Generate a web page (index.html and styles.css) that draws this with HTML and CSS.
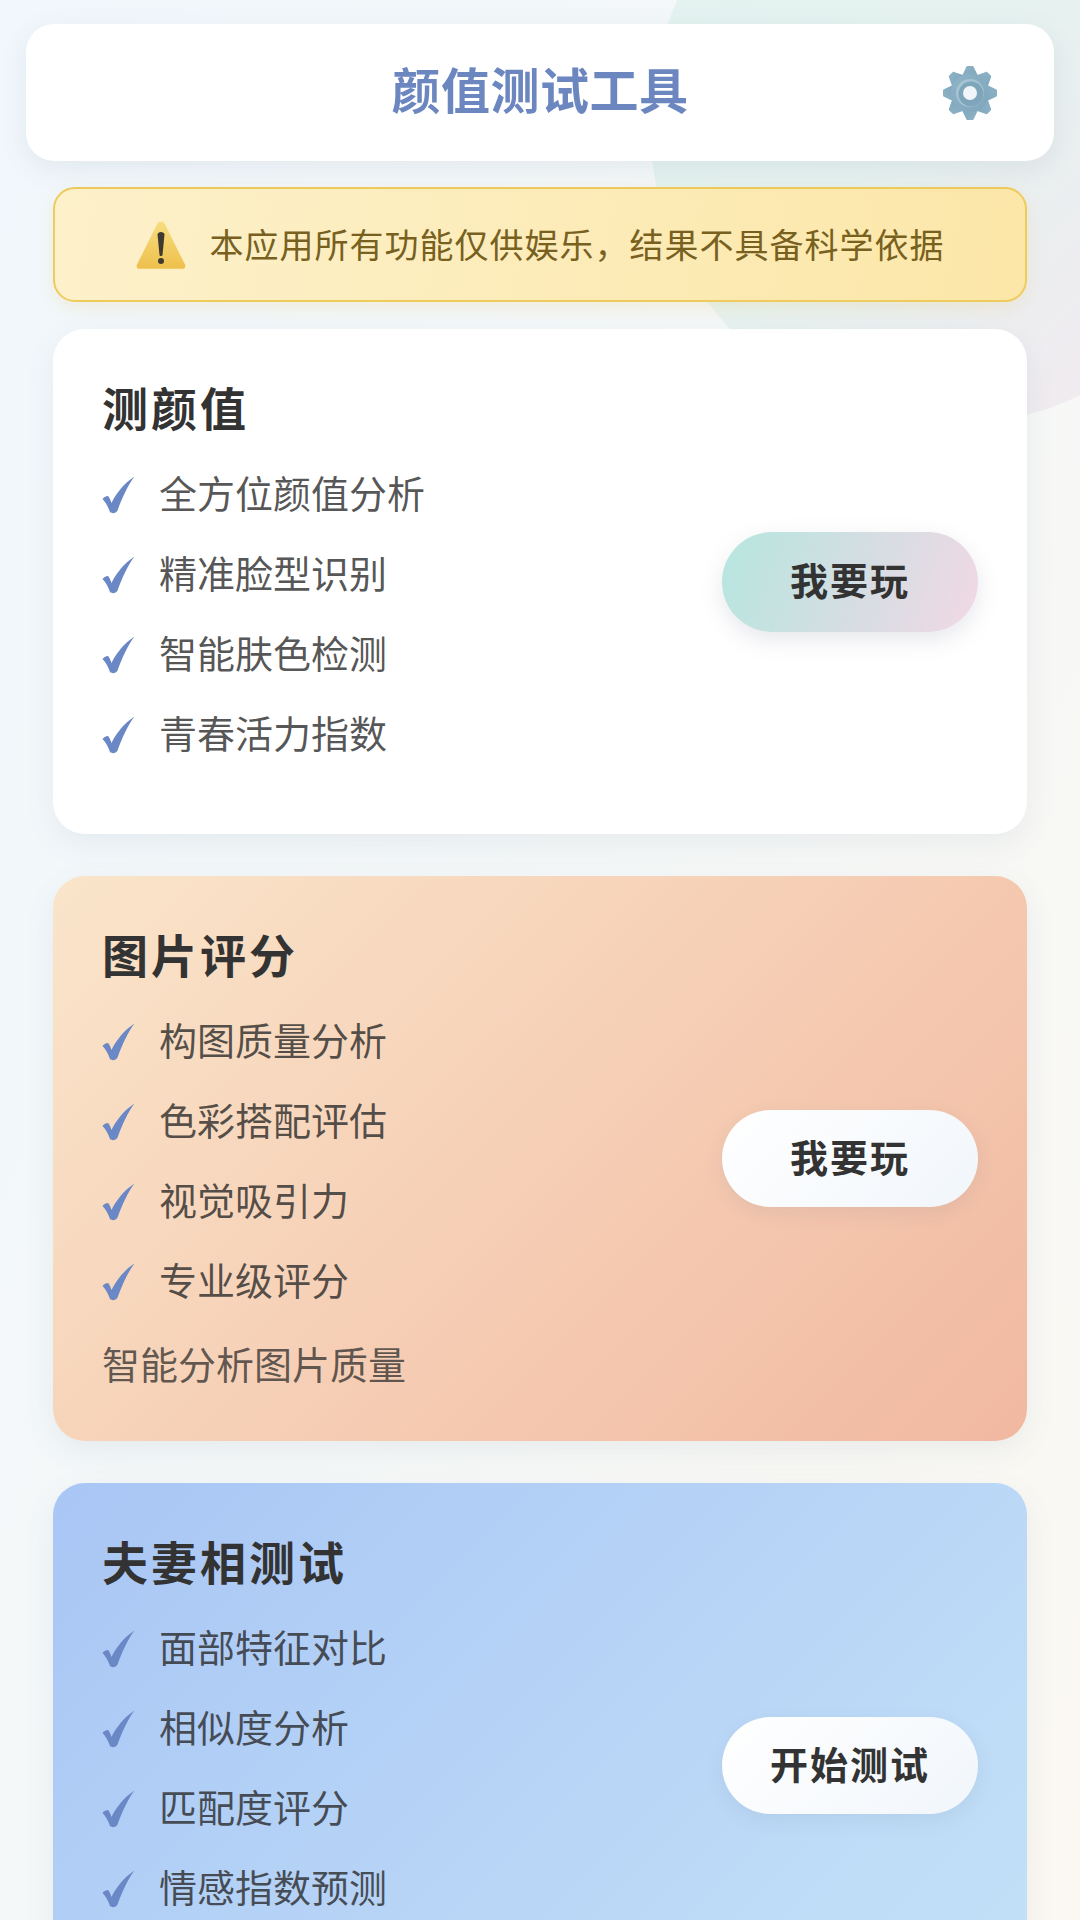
FILE: index.html
```html
<!DOCTYPE html>
<html lang="zh-CN">

<head>
    <meta charset="UTF-8">
    <meta name="viewport" content="width=device-width, initial-scale=1.0">
    <title>颜值测试工具</title>
    <link rel="stylesheet" href="styles.css">
</head>

<body>

    <svg width="0" height="0" class="defs">
        <defs>
            <symbol id="tick" viewBox="0 0 33 38" preserveAspectRatio="none">
                <path d="M0.5 23 C2 21 4 20 6 20 C7.5 21.5 8.5 24 9.5 27 C14 18 21 8 32.5 0.5 C26 9 20.5 21 15.5 34.5 C14 37.5 9.5 38 8 36 C6 30.5 3.5 26 0.5 23 Z" fill="#6a87c6" />
            </symbol>
        </defs>
    </svg>

    <div class="blob"></div>

    <div class="container">
        <header class="header">
            <h1 class="headerTitle">颜值测试工具</h1>
            <svg class="gear" viewBox="0 0 60 60">
                <defs>
                    <linearGradient id="gearFill" x1="0" y1="0" x2="1" y2="1">
                        <stop offset="0" stop-color="#8fb3c7" />
                        <stop offset="1" stop-color="#7ea6bb" />
                    </linearGradient>
                    <path id="gearTooth" d="M21 15 L26 4.5 C26.4 3.4 27 3 28 3 L32 3 C33 3 33.6 3.4 34 4.5 L39 15 Z" />
                </defs>
                <g fill="url(#gearFill)">
                    <use href="#gearTooth" />
                    <use href="#gearTooth" transform="rotate(45 30 30)" />
                    <use href="#gearTooth" transform="rotate(90 30 30)" />
                    <use href="#gearTooth" transform="rotate(135 30 30)" />
                    <use href="#gearTooth" transform="rotate(180 30 30)" />
                    <use href="#gearTooth" transform="rotate(225 30 30)" />
                    <use href="#gearTooth" transform="rotate(270 30 30)" />
                    <use href="#gearTooth" transform="rotate(315 30 30)" />
                    <circle cx="30" cy="30" r="19" />
                </g>
                <circle cx="30" cy="30" r="14" fill="#a5c4d3" />
                <circle cx="31" cy="31" r="12.5" fill="#7ea5ba" />
                <circle cx="30" cy="30" r="7" fill="#eff5f8" />
            </svg>
        </header>

        <div class="notice">
            <svg class="noticeIcon" viewBox="0 0 50 48">
                <defs>
                    <linearGradient id="warnFill" x1="0" y1="0" x2="0" y2="1">
                        <stop offset="0" stop-color="#f7dd80" />
                        <stop offset="1" stop-color="#eec04c" />
                    </linearGradient>
                </defs>
                <path d="M25 0.5 C27 0.5 28 1.5 28.8 3 L49 43.5 C50 46 48.8 47.8 46.5 47.8 L3.5 47.8 C1.2 47.8 0 46 1 43.5 L21.2 3 C22 1.5 23 0.5 25 0.5 Z" fill="url(#warnFill)" />
                <path d="M21.5 13.5 C21.5 10 28.5 10 28.5 13.5 L26.5 34 C26.4 35.4 23.6 35.4 23.5 34 Z" fill="#3f3a30" />
                <circle cx="25" cy="40" r="3" fill="#3f3a30" />
            </svg>
            <span class="noticeText">本应用所有功能仅供娱乐，结果不具备科学依据</span>
        </div>

        <section class="card">
            <div class="cardInfo">
                <h2 class="cardTitle">测颜值</h2>
                <ul class="points">
                    <li><svg class="tick"><use href="#tick" /></svg>全方位颜值分析</li>
                    <li><svg class="tick"><use href="#tick" /></svg>精准脸型识别</li>
                    <li><svg class="tick"><use href="#tick" /></svg>智能肤色检测</li>
                    <li><svg class="tick"><use href="#tick" /></svg>青春活力指数</li>
                </ul>
            </div>
            <button class="button buttonMint">我要玩</button>
        </section>

        <section class="card cardPeach">
            <div class="cardInfo">
                <h2 class="cardTitle">图片评分</h2>
                <ul class="points">
                    <li><svg class="tick"><use href="#tick" /></svg>构图质量分析</li>
                    <li><svg class="tick"><use href="#tick" /></svg>色彩搭配评估</li>
                    <li><svg class="tick"><use href="#tick" /></svg>视觉吸引力</li>
                    <li><svg class="tick"><use href="#tick" /></svg>专业级评分</li>
                </ul>
                <p class="cardDesc">智能分析图片质量</p>
            </div>
            <button class="button">我要玩</button>
        </section>

        <section class="card cardBlue">
            <div class="cardInfo">
                <h2 class="cardTitle">夫妻相测试</h2>
                <ul class="points">
                    <li><svg class="tick"><use href="#tick" /></svg>面部特征对比</li>
                    <li><svg class="tick"><use href="#tick" /></svg>相似度分析</li>
                    <li><svg class="tick"><use href="#tick" /></svg>匹配度评分</li>
                    <li><svg class="tick"><use href="#tick" /></svg>情感指数预测</li>
                </ul>
                <p class="cardDesc"></p>
            </div>
            <button class="button">开始测试</button>
        </section>
    </div>

</body>

</html>
```

FILE: styles.css
```css
* {
    box-sizing: border-box;
}

html,
body {
    height: 1920px;
    overflow: hidden;
}

body {
    margin: 0;
    position: relative;
    background: linear-gradient(115deg, #f1f7fc 0%, #f5f8f8 50%, #fbf8f2 100%);
    font-family: "Noto Sans CJK SC", "Noto Sans", sans-serif;
    color: #333;
}

.defs {
    position: absolute;
}

/* big pale circle behind the top of the page */
.blob {
    position: absolute;
    top: 0;
    left: 650px;
    width: 430px;
    height: 425px;
    background: linear-gradient(135deg, #e3f3f0 0%, #e6f2f0 45%, #f1ebf0 100%);
    clip-path: circle(300px at 300px 125px);
}

.container {
    position: relative;
    padding: 24px 26px 0;
}

.header {
    height: 137px;
    background: #fff;
    border-radius: 28px;
    box-shadow: 0 8px 28px rgba(90, 110, 130, 0.1);
    display: flex;
    align-items: center;
    justify-content: center;
    position: relative;
}

.headerTitle {
    margin: 0 0 10px;
    font-size: 49px;
    font-weight: 700;
    line-height: 60px;
    letter-spacing: 0.5px;
    color: #6c86c0;
}

.gear {
    position: absolute;
    right: 54px;
    top: 39px;
    width: 60px;
    height: 60px;
}

.notice {
    margin: 26px 27px 27px;
    height: 115px;
    border: 2px solid #efcb5c;
    border-radius: 22px;
    background: linear-gradient(100deg, #fdf1cb 0%, #fce7a8 100%);
    box-shadow: 0 6px 18px rgba(225, 190, 90, 0.18);
    display: flex;
    align-items: center;
    justify-content: center;
    gap: 24px;
}

.noticeIcon {
    width: 50px;
    height: 48px;
    flex-shrink: 0;
}

.noticeText {
    margin-bottom: 2px;
    font-size: 34px;
    letter-spacing: 1px;
    line-height: 48px;
    color: #78601f;
}

.card {
    margin: 0 27px 42px;
    padding: 49px 49px 49px 49px;
    background: #fff;
    border-radius: 32px;
    box-shadow: 0 10px 30px rgba(90, 110, 130, 0.09);
    display: flex;
    align-items: center;
    justify-content: space-between;
}

.cardPeach {
    background: linear-gradient(135deg, #fae5ca 0%, #f1b8a0 100%);
}

.cardBlue {
    background: linear-gradient(135deg, #a9c6f5 0%, #c5e2f8 100%);
}

.cardTitle {
    margin: 0 0 30px;
    font-size: 46px;
    font-weight: 700;
    line-height: 56px;
    letter-spacing: 3px;
    color: #333;
}

.points {
    list-style: none;
    margin: 0 0 25px;
    padding: 0;
}

.points li {
    display: flex;
    align-items: center;
    height: 56px;
    margin-bottom: 24px;
    font-size: 38px;
    line-height: 56px;
    color: rgba(40, 40, 40, 0.78);
}

.points li:last-child {
    margin-bottom: 0;
}

.tick {
    width: 33px;
    height: 38px;
    margin: 5px 24px 0 0;
    flex-shrink: 0;
}

.cardDesc {
    margin: 31px 0 4px;
    height: 50px;
    font-size: 38px;
    line-height: 50px;
    color: rgba(40, 40, 40, 0.72);
}

.button {
    width: 256px;
    height: 97px;
    padding: 0 0 6px;
    border: 0;
    border-radius: 50px;
    background: linear-gradient(135deg, #ffffff 0%, #f1f6fb 100%);
    box-shadow: 0 6px 18px rgba(90, 110, 130, 0.1);
    font-family: inherit;
    font-size: 38px;
    font-weight: 700;
    letter-spacing: 2px;
    color: #333;
}

.buttonMint {
    height: 100px;
    background: linear-gradient(110deg, #b6e6df 0%, #d6dde3 55%, #f1d8e4 100%);
    box-shadow: 0 8px 22px rgba(120, 130, 150, 0.18);
}
```
